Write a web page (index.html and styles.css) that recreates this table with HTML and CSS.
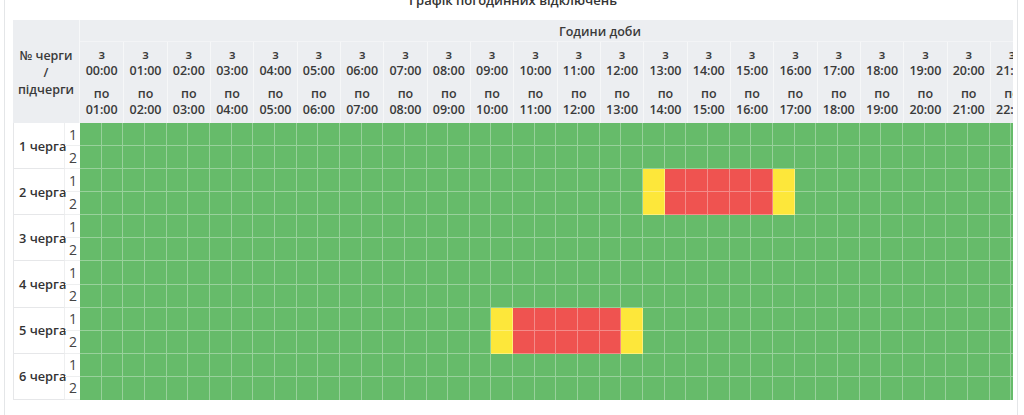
FILE: index.html
```html
<!DOCTYPE html>
<html lang="uk">
<head>
<meta charset="utf-8">
<title>Графік погодинних відключень</title>
<link rel="stylesheet" href="styles.css">
</head>
<body>
<div class="panel">
  <h3 class="title">Графік погодинних відключень</h3>
  <div class="scroll">
    <div class="sched">
      <div class="corner"><span>№ черги</span><span>/</span><span>підчерги</span></div>
      <div class="hours-title">Години доби</div>

      <div class="hour"><span>з</span><span>00:00</span><span class="to">по</span><span>01:00</span></div>
      <div class="hour"><span>з</span><span>01:00</span><span class="to">по</span><span>02:00</span></div>
      <div class="hour"><span>з</span><span>02:00</span><span class="to">по</span><span>03:00</span></div>
      <div class="hour"><span>з</span><span>03:00</span><span class="to">по</span><span>04:00</span></div>
      <div class="hour"><span>з</span><span>04:00</span><span class="to">по</span><span>05:00</span></div>
      <div class="hour"><span>з</span><span>05:00</span><span class="to">по</span><span>06:00</span></div>
      <div class="hour"><span>з</span><span>06:00</span><span class="to">по</span><span>07:00</span></div>
      <div class="hour"><span>з</span><span>07:00</span><span class="to">по</span><span>08:00</span></div>
      <div class="hour"><span>з</span><span>08:00</span><span class="to">по</span><span>09:00</span></div>
      <div class="hour"><span>з</span><span>09:00</span><span class="to">по</span><span>10:00</span></div>
      <div class="hour"><span>з</span><span>10:00</span><span class="to">по</span><span>11:00</span></div>
      <div class="hour"><span>з</span><span>11:00</span><span class="to">по</span><span>12:00</span></div>
      <div class="hour"><span>з</span><span>12:00</span><span class="to">по</span><span>13:00</span></div>
      <div class="hour"><span>з</span><span>13:00</span><span class="to">по</span><span>14:00</span></div>
      <div class="hour"><span>з</span><span>14:00</span><span class="to">по</span><span>15:00</span></div>
      <div class="hour"><span>з</span><span>15:00</span><span class="to">по</span><span>16:00</span></div>
      <div class="hour"><span>з</span><span>16:00</span><span class="to">по</span><span>17:00</span></div>
      <div class="hour"><span>з</span><span>17:00</span><span class="to">по</span><span>18:00</span></div>
      <div class="hour"><span>з</span><span>18:00</span><span class="to">по</span><span>19:00</span></div>
      <div class="hour"><span>з</span><span>19:00</span><span class="to">по</span><span>20:00</span></div>
      <div class="hour"><span>з</span><span>20:00</span><span class="to">по</span><span>21:00</span></div>
      <div class="hour"><span>з</span><span>21:00</span><span class="to">по</span><span>22:00</span></div>
      <div class="hour"><span>з</span><span>22:00</span><span class="to">по</span><span>23:00</span></div>
      <div class="hour"><span>з</span><span>23:00</span><span class="to">по</span><span>24:00</span></div>

      <!-- 1 черга -->
      <div class="queue">1 черга</div>
      <div class="sub">1</div>
      <div class="slots"><span></span><span></span><span></span><span></span><span></span><span></span><span></span><span></span><span></span><span></span><span></span><span></span><span></span><span></span><span></span><span></span><span></span><span></span><span></span><span></span><span></span><span></span><span></span><span></span><span></span><span></span><span></span><span></span><span></span><span></span><span></span><span></span><span></span><span></span><span></span><span></span><span></span><span></span><span></span><span></span><span></span><span></span><span></span><span></span><span></span><span></span><span></span><span></span></div>
      <div class="sub">2</div>
      <div class="slots"><span></span><span></span><span></span><span></span><span></span><span></span><span></span><span></span><span></span><span></span><span></span><span></span><span></span><span></span><span></span><span></span><span></span><span></span><span></span><span></span><span></span><span></span><span></span><span></span><span></span><span></span><span></span><span></span><span></span><span></span><span></span><span></span><span></span><span></span><span></span><span></span><span></span><span></span><span></span><span></span><span></span><span></span><span></span><span></span><span></span><span></span><span></span><span></span></div>

      <!-- 2 черга -->
      <div class="queue">2 черга</div>
      <div class="sub">1</div>
      <div class="slots"><span></span><span></span><span></span><span></span><span></span><span></span><span></span><span></span><span></span><span></span><span></span><span></span><span></span><span></span><span></span><span></span><span></span><span></span><span></span><span></span><span></span><span></span><span></span><span></span><span></span><span></span><span class="y"></span><span class="r"></span><span class="r"></span><span class="r"></span><span class="r"></span><span class="r"></span><span class="y"></span><span></span><span></span><span></span><span></span><span></span><span></span><span></span><span></span><span></span><span></span><span></span><span></span><span></span><span></span><span></span></div>
      <div class="sub">2</div>
      <div class="slots"><span></span><span></span><span></span><span></span><span></span><span></span><span></span><span></span><span></span><span></span><span></span><span></span><span></span><span></span><span></span><span></span><span></span><span></span><span></span><span></span><span></span><span></span><span></span><span></span><span></span><span></span><span class="y"></span><span class="r"></span><span class="r"></span><span class="r"></span><span class="r"></span><span class="r"></span><span class="y"></span><span></span><span></span><span></span><span></span><span></span><span></span><span></span><span></span><span></span><span></span><span></span><span></span><span></span><span></span><span></span></div>

      <!-- 3 черга -->
      <div class="queue">3 черга</div>
      <div class="sub">1</div>
      <div class="slots"><span></span><span></span><span></span><span></span><span></span><span></span><span></span><span></span><span></span><span></span><span></span><span></span><span></span><span></span><span></span><span></span><span></span><span></span><span></span><span></span><span></span><span></span><span></span><span></span><span></span><span></span><span></span><span></span><span></span><span></span><span></span><span></span><span></span><span></span><span></span><span></span><span></span><span></span><span></span><span></span><span></span><span></span><span></span><span></span><span></span><span></span><span></span><span></span></div>
      <div class="sub">2</div>
      <div class="slots"><span></span><span></span><span></span><span></span><span></span><span></span><span></span><span></span><span></span><span></span><span></span><span></span><span></span><span></span><span></span><span></span><span></span><span></span><span></span><span></span><span></span><span></span><span></span><span></span><span></span><span></span><span></span><span></span><span></span><span></span><span></span><span></span><span></span><span></span><span></span><span></span><span></span><span></span><span></span><span></span><span></span><span></span><span></span><span></span><span></span><span></span><span></span><span></span></div>

      <!-- 4 черга -->
      <div class="queue">4 черга</div>
      <div class="sub">1</div>
      <div class="slots"><span></span><span></span><span></span><span></span><span></span><span></span><span></span><span></span><span></span><span></span><span></span><span></span><span></span><span></span><span></span><span></span><span></span><span></span><span></span><span></span><span></span><span></span><span></span><span></span><span></span><span></span><span></span><span></span><span></span><span></span><span></span><span></span><span></span><span></span><span></span><span></span><span></span><span></span><span></span><span></span><span></span><span></span><span></span><span></span><span></span><span></span><span></span><span></span></div>
      <div class="sub">2</div>
      <div class="slots"><span></span><span></span><span></span><span></span><span></span><span></span><span></span><span></span><span></span><span></span><span></span><span></span><span></span><span></span><span></span><span></span><span></span><span></span><span></span><span></span><span></span><span></span><span></span><span></span><span></span><span></span><span></span><span></span><span></span><span></span><span></span><span></span><span></span><span></span><span></span><span></span><span></span><span></span><span></span><span></span><span></span><span></span><span></span><span></span><span></span><span></span><span></span><span></span></div>

      <!-- 5 черга -->
      <div class="queue">5 черга</div>
      <div class="sub">1</div>
      <div class="slots"><span></span><span></span><span></span><span></span><span></span><span></span><span></span><span></span><span></span><span></span><span></span><span></span><span></span><span></span><span></span><span></span><span></span><span></span><span></span><span class="y"></span><span class="r"></span><span class="r"></span><span class="r"></span><span class="r"></span><span class="r"></span><span class="y"></span><span></span><span></span><span></span><span></span><span></span><span></span><span></span><span></span><span></span><span></span><span></span><span></span><span></span><span></span><span></span><span></span><span></span><span></span><span></span><span></span><span></span><span></span></div>
      <div class="sub">2</div>
      <div class="slots"><span></span><span></span><span></span><span></span><span></span><span></span><span></span><span></span><span></span><span></span><span></span><span></span><span></span><span></span><span></span><span></span><span></span><span></span><span></span><span class="y"></span><span class="r"></span><span class="r"></span><span class="r"></span><span class="r"></span><span class="r"></span><span class="y"></span><span></span><span></span><span></span><span></span><span></span><span></span><span></span><span></span><span></span><span></span><span></span><span></span><span></span><span></span><span></span><span></span><span></span><span></span><span></span><span></span><span></span><span></span></div>

      <!-- 6 черга -->
      <div class="queue">6 черга</div>
      <div class="sub">1</div>
      <div class="slots"><span></span><span></span><span></span><span></span><span></span><span></span><span></span><span></span><span></span><span></span><span></span><span></span><span></span><span></span><span></span><span></span><span></span><span></span><span></span><span></span><span></span><span></span><span></span><span></span><span></span><span></span><span></span><span></span><span></span><span></span><span></span><span></span><span></span><span></span><span></span><span></span><span></span><span></span><span></span><span></span><span></span><span></span><span></span><span></span><span></span><span></span><span></span><span></span></div>
      <div class="sub">2</div>
      <div class="slots last"><span></span><span></span><span></span><span></span><span></span><span></span><span></span><span></span><span></span><span></span><span></span><span></span><span></span><span></span><span></span><span></span><span></span><span></span><span></span><span></span><span></span><span></span><span></span><span></span><span></span><span></span><span></span><span></span><span></span><span></span><span></span><span></span><span></span><span></span><span></span><span></span><span></span><span></span><span></span><span></span><span></span><span></span><span></span><span></span><span></span><span></span><span></span><span></span></div>
    </div>
  </div>
</div>
</body>
</html>
```

FILE: styles.css
```css
* { box-sizing: border-box; }

html, body {
  margin: 0;
  padding: 0;
  background: #fff;
  overflow: hidden;
}

body {
  font-family: "Open Sans", "Noto Sans", sans-serif;
  color: #3a3a3a;
}

.panel {
  margin-left: 4px;
  width: 1014px;
  min-height: 430px;
  border-left: 1px solid #e4e6e8;
  border-right: 1px solid #e4e6e8;
  padding: 0 4px 0 8px;
}

.title {
  margin: -9px 0 11px;
  height: 18px;
  font-size: 13px;
  line-height: 18px;
  font-weight: 600;
  text-align: center;
  color: #333;
}

.scroll {
  width: 1000px;
  overflow: hidden;
}

.sched {
  display: grid;
  grid-template-columns: 52px 15px repeat(24, 43.333px);
  grid-template-rows: 22px 81px repeat(12, 23.083px);
  width: max-content;
  font-size: 12.5px;
}

.corner {
  grid-column: 1 / 3;
  grid-row: 1 / 3;
  background: #eceef1;
  border-right: 1px solid #f7f8f9;
  display: flex;
  flex-direction: column;
  justify-content: center;
  align-items: center;
  font-weight: 600;
  line-height: 17px;
  padding-top: 1px;
}

.hours-title {
  grid-column: 3 / -1;
  background: #eceef1;
  border-bottom: 1px solid #f3f4f6;
  font-weight: 600;
  line-height: 23px;
  text-align: center;
}

.hour {
  background: #eceef1;
  border-left: 1px solid #f6f7f8;
  display: flex;
  flex-direction: column;
  align-items: center;
  padding-top: 5px;
  font-weight: 600;
  line-height: 16px;
}

.hour:nth-of-type(3) { border-left: 0; }

.hour .to { margin-top: 7px; }

.queue {
  grid-row: span 2;
  border-left: 1px solid #e6e7e9;
  border-bottom: 1px solid #e6e7e9;
  border-right: 1px solid #eeeff0;
  display: flex;
  align-items: center;
  padding-left: 5px;
  font-weight: 600;
  font-size: 12.8px;
  color: #333;
  white-space: nowrap;
}

.sub {
  display: flex;
  align-items: center;
  justify-content: center;
  font-size: 14px;
  color: #444;
  border-bottom: 1px solid #eeeff0;
  padding-left: 1px;
}

.slots {
  grid-column: 3 / -1;
  display: grid;
  grid-template-columns: repeat(48, 21.667px);
}

.slots span {
  background: #66bb6a;
  box-shadow: inset -1px -1px 0 rgba(255, 255, 255, 0.33);
}

.slots span.y { background: #fde73a; }
.slots span.r { background: #ef5350; }

.slots.last span { box-shadow: inset -1px 0 0 rgba(255, 255, 255, 0.33); }
```
